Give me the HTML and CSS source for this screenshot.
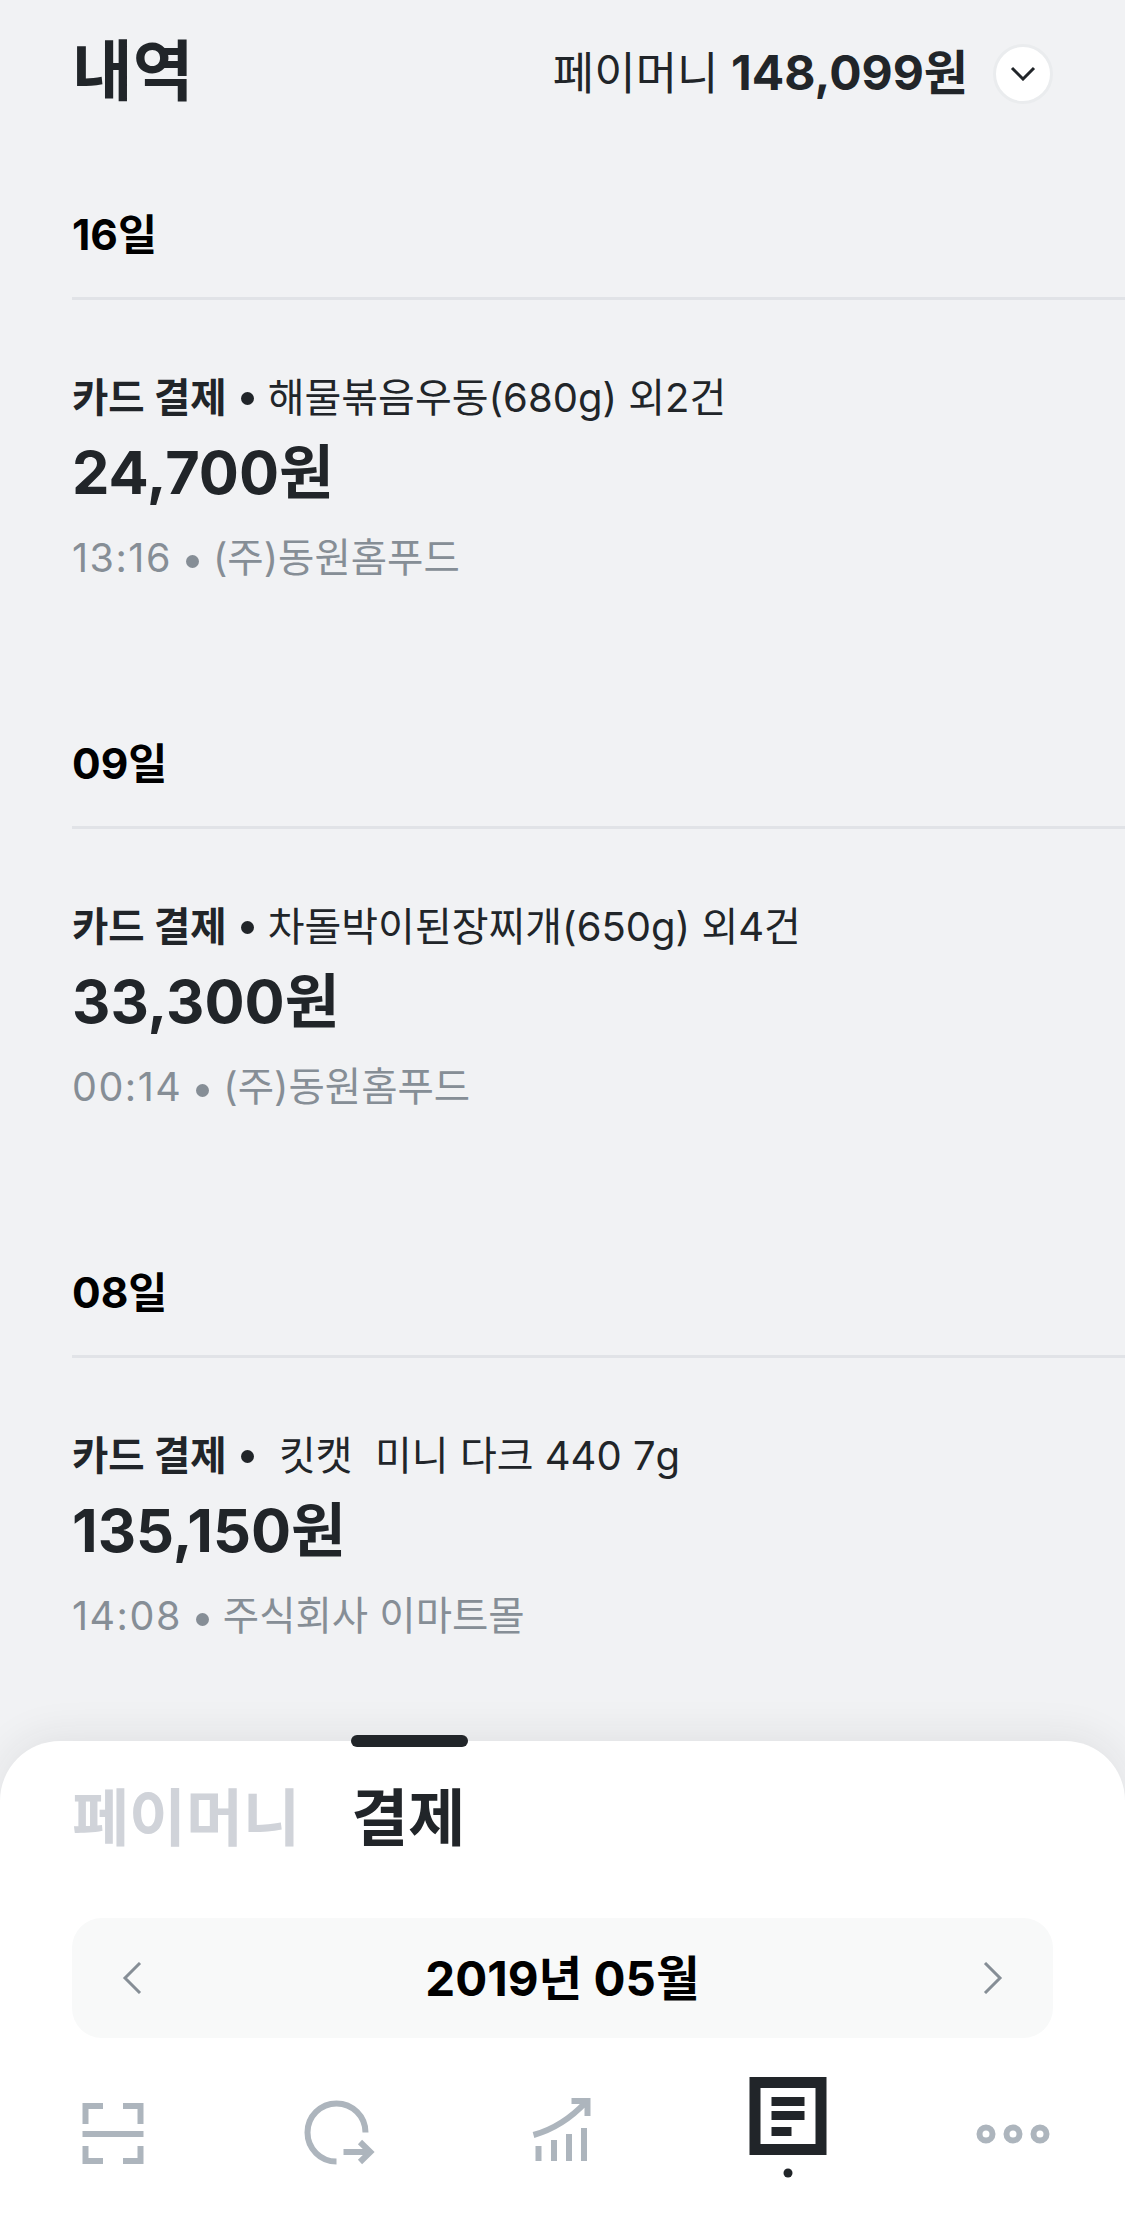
FILE: index.html
```html
<!DOCTYPE html>
<html lang="ko">
  <head>
    <meta charset="UTF-8" />
    <title>내역</title>
    <link rel="stylesheet" href="styles.css">
  </head>
  <body>
    <main class="history">
      <header class="top">
        <h1>내역</h1>
        <div class="balance">
          <span>페이머니 <b>148,099원</b></span>
          <button class="round_btn">
            <svg width="26" height="15" viewBox="0 0 26 15"><path d="M2 2l11 11L24 2" fill="none" stroke="#212529" stroke-width="3"/></svg>
          </button>
        </div>
      </header>

      <section class="day">
        <h2>16일</h2>
        <p class="title"><b>카드 결제</b><i class="dot"></i><span>해물볶음우동(680g) 외2건</span></p>
        <p class="amount">24,700원</p>
        <p class="meta"><span class="time">13:16</span><i class="dot"></i>(주)동원홈푸드</p>
      </section>

      <section class="day">
        <h2>09일</h2>
        <p class="title"><b>카드 결제</b><i class="dot"></i><span>차돌박이된장찌개(650g) 외4건</span></p>
        <p class="amount">33,300원</p>
        <p class="meta"><span class="time">00:14</span><i class="dot"></i>(주)동원홈푸드</p>
      </section>

      <section class="day">
        <h2>08일</h2>
        <p class="title"><b>카드 결제</b><i class="dot"></i><span> 킷캣  미니 다크 440 7g</span></p>
        <p class="amount">135,150원</p>
        <p class="meta"><span class="time">14:08</span><i class="dot"></i>주식회사 이마트몰</p>
      </section>
    </main>

    <div class="sheet">
      <div class="handle"></div>
      <div class="tabs">
        <span>페이머니</span>
        <span class="active">결제</span>
      </div>
      <div class="month">
        <svg width="20" height="32" viewBox="0 0 20 32"><path d="M18 1L3 16l15 15" fill="none" stroke="#868e96" stroke-width="3"/></svg>
        <strong>2019년 05월</strong>
        <svg width="20" height="32" viewBox="0 0 20 32"><path d="M2 1l15 15L2 31" fill="none" stroke="#868e96" stroke-width="3"/></svg>
      </div>
      <nav class="tabbar">
        <svg viewBox="0 0 100 120"><path class="ic" d="M40 46H22.500v18M60 46h17.500v18M19.500 74h61M40 101H22.500V86M60 101h17.500V86"/></svg>
        <svg viewBox="0 0 100 120"><path class="ic" d="M77.500 72.500A29 29 0 1 0 48.500 101.500M55.500 92H82M72 82l10.300 10L72 102"/></svg>
        <svg viewBox="0 0 100 120">
          <path class="ic" d="M20.500 75C42 69 58 58 73 42M58.500 41h16v15"/>
          <path class="fill" d="M22.500 86h6v15h-6zM38 80h6v21h-6zM53 74h6v27h-6zM68 68h6v33h-6z"/>
        </svg>
        <svg viewBox="0 0 100 120">
          <rect x="17" y="22.500" width="66" height="67" fill="none" stroke="#212529" stroke-width="11"/>
          <path fill="#212529" d="M33.500 37h33v9h-33zM33.500 51h33v9h-33zM33.500 67h20v9h-20z"/>
          <circle cx="50" cy="113" r="4.500" fill="#212529"/>
        </svg>
        <svg viewBox="0 0 100 120">
          <circle class="ic" cx="23" cy="74" r="6.500"/>
          <circle class="ic" cx="50" cy="74" r="6.500"/>
          <circle class="ic" cx="77" cy="74" r="6.500"/>
        </svg>
      </nav>
    </div>
  </body>
</html>
```

FILE: styles.css
```css
*,
*::before,
*::after {
  box-sizing: border-box;
}
html {
  font-family: Inter, "Noto Sans CJK KR", sans-serif;
  margin: 0;
  padding: 0;
}
body {
  width: 1125px;
  height: 2214px;
  margin: 0;
  overflow: hidden;
  display: flex;
  flex-direction: column;
  background: #f1f2f4;
  color: #212529;
}
p,
h1,
h2 {
  margin: 0;
}

.history {
  flex: 1;
  min-height: 0;
  overflow: hidden;
  padding-left: 72px;
}

.top {
  height: 205px;
  padding: 26px 72px 0 0;
  display: flex;
  justify-content: space-between;
  align-items: flex-start;
}
.top h1 {
  margin-top: 3px;
  font-size: 66px;
  line-height: 84px;
  font-weight: 700;
}
.balance {
  display: flex;
  align-items: center;
  gap: 25px;
  margin-top: 16px;
  font-size: 45px;
  line-height: 62px;
}
.balance b {
  font-size: 48px;
  font-weight: 700;
}
.round_btn {
  width: 60px;
  height: 60px;
  padding: 0;
  border: 3px solid #eaecee;
  border-radius: 50%;
  background: #fff;
  display: flex;
  align-items: center;
  justify-content: center;
}

.day + .day {
  margin-top: 151px;
}
.day h2 {
  height: 95px;
  padding-bottom: 32px;
  border-bottom: 3px solid #e1e3e7;
  margin-bottom: 71px;
  font-size: 42.500px;
  line-height: 60px;
  font-weight: 700;
  color: #000;
}
.title {
  height: 54px;
  font-size: 40px;
  line-height: 54px;
  white-space: pre;
  display: flex;
  align-items: center;
}
.title b {
  font-size: 39.500px;
  font-weight: 700;
}
.dot {
  display: inline-block;
  width: 13px;
  height: 13px;
  margin: 0 14px;
  border-radius: 50%;
  background: currentColor;
  vertical-align: middle;
}
.amount {
  margin-top: 12px;
  font-size: 59.500px;
  line-height: 70px;
  font-weight: 700;
}
.meta {
  margin-top: 26px;
  font-size: 39.500px;
  line-height: 50px;
  color: #868e96;
}
.time {
  letter-spacing: 1.500px;
}

.sheet {
  position: relative;
  flex: none;
  height: 473px;
  padding: 0 72px;
  background: #fff;
  border-radius: 60px 60px 0 0;
  box-shadow: 0 -6px 40px rgba(33, 37, 41, 0.08);
}
.handle {
  position: absolute;
  top: -6px;
  left: 351px;
  width: 117px;
  height: 12px;
  border-radius: 6px;
  background: #212529;
}
.tabs {
  display: flex;
  gap: 51px;
  padding-top: 36px;
  font-size: 62px;
  line-height: 84px;
  font-weight: 700;
  color: #d0d3d9;
}
.tabs .active {
  color: #212529;
}
.month {
  height: 120px;
  margin-top: 57px;
  padding: 0 50px;
  border-radius: 30px;
  background: #f8f9f9;
  display: flex;
  align-items: center;
  justify-content: space-between;
}
.month strong {
  padding-bottom: 6px;
  font-size: 47.500px;
  font-weight: 700;
  color: #000;
}
.tabbar {
  margin: 22px -72px 0;
  display: grid;
  grid-template-columns: repeat(5, 1fr);
  justify-items: center;
}
.tabbar svg {
  width: 100px;
  height: 120px;
}
.ic {
  fill: none;
  stroke: #adb5bd;
  stroke-width: 6;
}
.fill {
  fill: #adb5bd;
}
```
